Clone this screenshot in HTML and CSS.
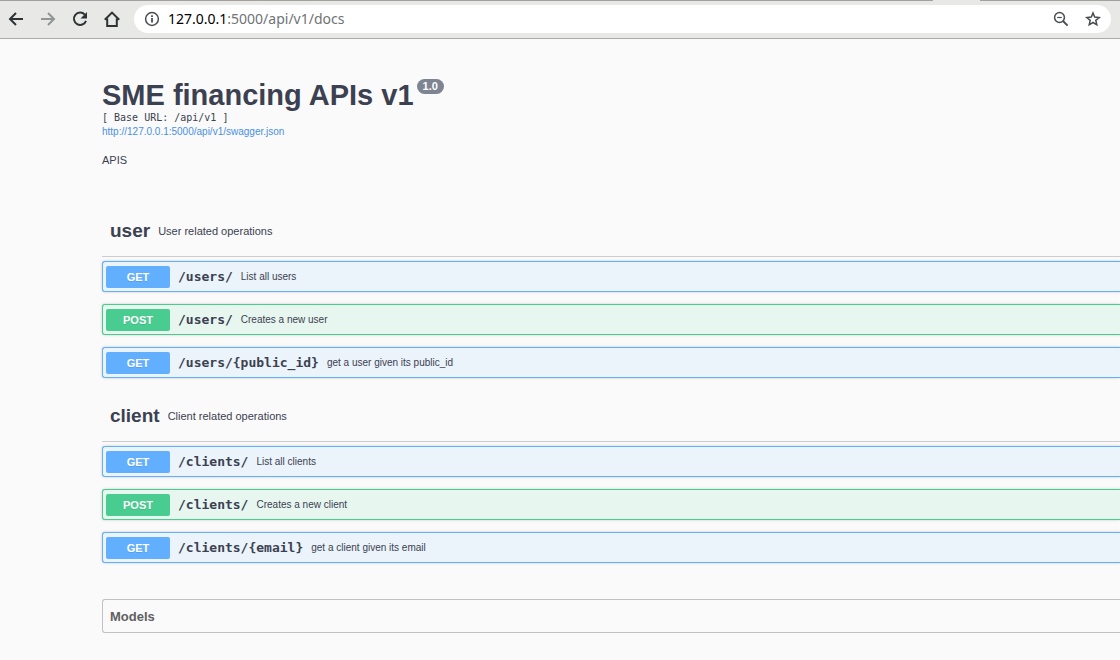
FILE: index.html
```html
<!DOCTYPE html>
<html lang="en">
<head>
<meta charset="utf-8">
<title>SME financing APIs v1</title>
<link rel="stylesheet" href="styles.css">
</head>
<body>
<header class="toolbar">
  <nav class="nav" aria-label="Browser">
    <button class="icon-btn" type="button" aria-label="Back"><svg viewBox="0 0 16 16"><path d="M15 8H2M8 2L2 8l6 6"/></svg></button>
    <button class="icon-btn icon-btn-off" type="button" aria-label="Forward" disabled><svg viewBox="0 0 16 16"><path d="M1 8h13M8 2l6 6-6 6"/></svg></button>
    <button class="icon-btn" type="button" aria-label="Reload"><svg viewBox="0 0 16 16"><path d="M12.8 3.6A6.2 6.2 0 1 0 14 9.8"/><path class="solid" d="M15 1v6.500H8.500z"/></svg></button>
    <button class="icon-btn" type="button" aria-label="Home"><svg viewBox="0 0 16 16"><path d="M0.800 8.800L8 1.600l7.200 7.200M3.200 7.500v7.400h9.600V7.500"/></svg></button>
  </nav>
  <div class="address">
    <svg class="small-icon" viewBox="0 0 16 16"><circle cx="8" cy="8" r="6.400"/><path d="M8 7v4.500M8 4.300v1.700" stroke-width="1.800"/></svg>
    <div class="url"><span class="host">127.0.0.1</span>:5000/api/v1/docs</div>
    <div class="actions">
      <button class="icon-btn" type="button" aria-label="Zoom"><svg class="small-icon" viewBox="0 0 16 16"><circle cx="6.500" cy="6.500" r="4.900"/><path d="M4.200 6.500h4.600" stroke-width="1.200"/><path d="M10 10l4.600 4.600" stroke-width="1.900"/></svg></button>
      <button class="icon-btn" type="button" aria-label="Bookmark"><svg class="small-icon" viewBox="0 0 16 16"><path d="M8 2l1.700 4.100 4.500.4-3.400 2.900 1 4.400L8 11.500l-3.800 2.300 1-4.400-3.400-2.900 4.500-.4z"/></svg></button>
    </div>
  </div>
  <span class="tab-edge"></span>
</header>
<main class="docs">
  <section class="info">
    <h1 class="title">SME financing APIs v1<span class="version">1.0</span></h1>
    <div class="base-url">[ Base URL: /api/v1 ]</div>
    <a class="spec-link" href="/api/v1/swagger.json">http://127.0.0.1:5000/api/v1/swagger.json</a>
    <p class="description">APIS</p>
  </section>
  <section class="group">
    <div class="group-head"><h2 class="group-name">user</h2><span class="group-note">User related operations</span></div>
    <div class="ops">
      <div class="op op-get"><button class="method" type="button">GET</button><span class="path">/users/</span><span class="summary">List all users</span></div>
      <div class="op op-post"><button class="method" type="button">POST</button><span class="path">/users/</span><span class="summary">Creates a new user</span></div>
      <div class="op op-get"><button class="method" type="button">GET</button><span class="path">/users/{public_id}</span><span class="summary">get a user given its public_id</span></div>
    </div>
  </section>
  <section class="group">
    <div class="group-head"><h2 class="group-name">client</h2><span class="group-note">Client related operations</span></div>
    <div class="ops">
      <div class="op op-get"><button class="method" type="button">GET</button><span class="path">/clients/</span><span class="summary">List all clients</span></div>
      <div class="op op-post"><button class="method" type="button">POST</button><span class="path">/clients/</span><span class="summary">Creates a new client</span></div>
      <div class="op op-get"><button class="method" type="button">GET</button><span class="path">/clients/{email}</span><span class="summary">get a client given its email</span></div>
    </div>
  </section>
  <section class="models"><h2 class="models-title">Models</h2></section>
</main>
</body>
</html>
```

FILE: styles.css
```css
* { box-sizing: border-box; }
body {
  margin: 0;
  background: #fafafa;
  color: #3b4151;
  font-family: "Liberation Sans", Arial, sans-serif;
}
h1, h2, p { margin: 0; }
button {
  border: 0;
  padding: 0;
  background: none;
  font: inherit;
}

/* Browser toolbar */
.toolbar {
  position: relative;
  display: flex;
  align-items: center;
  gap: 14px;
  padding: 4px 9px 5px 8px;
  background: #e8e8e7;
  border-top: 1px solid #a3a19e;
  border-bottom: 1px solid #aeaba6;
}
.tab-edge {
  position: absolute;
  top: -1px;
  right: 140px;
  width: 47px;
  height: 1px;
  background: #e8e8e7;
}
.nav { display: flex; gap: 16px; }
.icon-btn { display: flex; color: #2e3436; }
.icon-btn-off { color: #929595; }
svg {
  width: 16px;
  height: 16px;
  fill: none;
  stroke: currentColor;
  stroke-width: 2;
}
.solid { fill: currentColor; stroke: none; }
.small-icon { color: #4a4d50; stroke-width: 1.500; }
.address {
  flex: 1;
  display: flex;
  align-items: center;
  gap: 8px;
  height: 28px;
  padding: 0 10px;
  border-radius: 14px;
  background: #fff;
}
.url {
  flex: 1;
  color: #707375;
  font: 14px/20px "Noto Sans", "Open Sans", sans-serif;
}
.host { color: #000; }
.actions { display: flex; gap: 16px; }

/* API documentation */
.docs { padding: 40px 0 27px 102px; }
.info { height: 127px; }
.title {
  display: flex;
  gap: 3px;
  font-size: 29px;
  line-height: 32px;
}
.version {
  align-self: flex-start;
  padding: 0 6px;
  border-radius: 8px;
  background: #7d8492;
  color: #fff;
  font-size: 11px;
  line-height: 15px;
}
.base-url {
  font: 10px/14px "DejaVu Sans Mono", monospace;
}
.spec-link {
  display: block;
  color: #4990e2;
  font-size: 10px;
  line-height: 14px;
  text-decoration: none;
}
.description {
  margin-top: 14px;
  font-size: 11px;
  line-height: 14px;
}
.group { margin-bottom: 13px; }
.group-head {
  display: flex;
  align-items: center;
  gap: 8px;
  height: 51px;
  padding: 0 8px;
  border-bottom: 1px solid #cccccd;
}
.group-name { font-size: 19px; line-height: 22px; }
.group-note { font-size: 11px; line-height: 14px; }
.ops {
  display: flex;
  flex-direction: column;
  gap: 12px;
  padding-top: 4px;
}
.op {
  display: flex;
  align-items: center;
  padding: 4px 3px 3px;
  border: 1px solid;
  border-right: 0;
  border-radius: 3px 0 0 3px;
  box-shadow: 0 0 3px rgba(0, 0, 0, 0.19);
}
.op-get { background: #ebf3fb; border-color: #61affe; }
.op-post { background: #e8f6f0; border-color: #49cc90; }
.method {
  width: 64px;
  border-radius: 2px;
  color: #fff;
  font-size: 11px;
  font-weight: 700;
  line-height: 22px;
  text-shadow: 0 1px 0 rgba(0, 0, 0, 0.1);
}
.op-get .method { background: #61affe; }
.op-post .method { background: #49cc90; }
.path {
  padding: 0 8px;
  font: 700 13px/16px "DejaVu Sans Mono", monospace;
}
.summary { font-size: 10px; line-height: 14px; }
.models {
  margin-top: 36px;
  padding: 9px 7px 7px;
  border: 1px solid #bfc1c4;
  border-right: 0;
  border-radius: 3px 0 0 3px;
}
.models-title { color: #606060; font-size: 13px; line-height: 16px; }
```
